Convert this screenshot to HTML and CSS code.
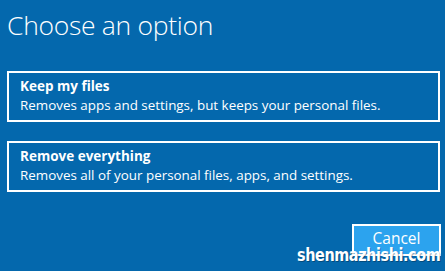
FILE: index.html
```html
<!DOCTYPE html>
<html>
<head>
<meta charset="utf-8">
<link rel="stylesheet" href="styles.css">
</head>
<body>
<div class="page">
  <h1 class="title">Choose an option</h1>
  <div class="options">
    <div class="option">
      <div class="option-title">Keep my files</div>
      <div class="option-desc">Removes apps and settings, but keeps your personal files.</div>
    </div>
    <div class="option">
      <div class="option-title">Remove everything</div>
      <div class="option-desc">Removes all of your personal files, apps, and settings.</div>
    </div>
  </div>
  <div class="footer">
    <button class="cancel">Cancel</button>
  </div>
  <div class="watermark">shenmazhishi.com</div>
</div>
</body>
</html>
```
FILE: styles.css
```css
html, body {
  margin: 0;
  padding: 0;
}
body {
  background: #0468ad;
  width: 445px;
  height: 271px;
  overflow: hidden;
  font-family: "Open Sans", "Noto Sans", sans-serif;
  color: #ffffff;
}
.page {
  position: relative;
  height: 271px;
  padding: 0 4px 0 7px;
  box-sizing: border-box;
}
.title {
  margin: 0;
  padding-top: 6.5px;
  font-weight: 300;
  font-size: 26.5px;
  line-height: 36px;
  letter-spacing: -0.3px;
}
.options {
  display: flex;
  flex-direction: column;
  gap: 19px;
  margin-top: 28.5px;
}
.option {
  width: 433px;
  height: 51px;
  box-sizing: border-box;
  border: 2px solid #ffffff;
  padding: 3.5px 0 0 11px;
}
.option-title {
  font-weight: 700;
  font-size: 13.5px;
  line-height: 19px;
}
.option-desc {
  font-size: 13.4px;
  line-height: 19px;
}
.footer {
  display: flex;
  justify-content: flex-end;
  margin-top: 32px;
}
.cancel {
  width: 89px;
  height: 32px;
  box-sizing: border-box;
  background: #2ca3ee;
  border: 2px solid #ffffff;
  color: #ffffff;
  font-family: "Open Sans", "Noto Sans", sans-serif;
  font-size: 15.5px;
  line-height: 20px;
  padding: 0 0 4px 0;
}
.watermark {
  position: absolute;
  left: 297px;
  top: 246px;
  font-family: "DejaVu Sans Condensed", "DejaVu Sans", sans-serif;
  font-weight: 700;
  font-size: 16px;
  line-height: 16px;
  color: #ffffff;
  letter-spacing: -0.4px;
  transform: scaleY(1.15);
  transform-origin: top left;
  text-shadow: 1px 1px 0 rgba(0,0,0,0.3);
}
```
